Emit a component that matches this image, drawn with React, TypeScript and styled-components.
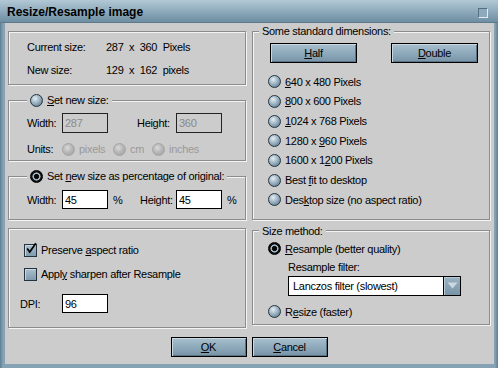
import React from 'react';
import styled, { createGlobalStyle, css } from 'styled-components';

const GlobalStyle = createGlobalStyle`
  html, body {
    margin: 0;
    padding: 0;
    background: #cccccc;
  }
  body {
    font-family: 'Liberation Sans', Arial, sans-serif;
    font-size: 11px;
    letter-spacing: -0.3px;
    color: #000;
  }
  u {
    text-decoration: underline;
    text-underline-offset: 1px;
  }
`;

const Window = styled.div`
  width: 498px;
  height: 368px;
  display: flex;
  flex-direction: column;
  overflow: hidden;
`;

const TitleBar = styled.div`
  height: 23px;
  flex: none;
  display: flex;
  align-items: center;
  justify-content: space-between;
  padding: 0 10px 0 7px;
  box-sizing: border-box;
  background: linear-gradient(180deg, #b3c8d5 0%, #92aebf 45%, #6f8ea3 100%);
  border-bottom: 1px solid #5d7a8d;
`;

const Title = styled.div`
  font-weight: bold;
  font-size: 12px;
  letter-spacing: 0;
  padding-top: 1px;
`;

const CloseBox = styled.div`
  width: 10px;
  height: 10px;
  box-sizing: border-box;
  border: 1px solid;
  border-color: #56707f #e3ebf0 #e3ebf0 #56707f;
  background: #8ea9ba;
  margin-top: 3px;
`;

const Frame = styled.div`
  flex: 1;
  display: flex;
  padding: 0 4px 4px 5px;
  background: linear-gradient(90deg, #5f7f93 0, #86a3b5 3px, #86a3b5 calc(100% - 3px), #5f7f93 100%);
`;

const Body = styled.div`
  flex: 1;
  background: #cccccc;
  padding: 1px 4px 0 3px;
  display: flex;
  flex-direction: column;
`;

const Columns = styled.div`
  display: grid;
  grid-template-columns: 238px 238px;
  column-gap: 6px;
  align-items: start;
`;

const Column = styled.div`
  display: flex;
  flex-direction: column;
`;

const etched = css`
  border: 1px solid #8c8c8c;
  box-shadow: inset 1px 1px 0 #f4f4f4, 1px 1px 0 #f4f4f4;
`;

const Panel = styled.div<{ $top: number; $height: number }>`
  ${etched};
  box-sizing: border-box;
  margin-top: ${p => p.$top}px;
  height: ${p => p.$height}px;
`;

const Group = styled.fieldset<{ $top: number }>`
  ${etched};
  margin: ${p => p.$top}px 0 0 0;
  padding: 0;
  min-width: 0;
`;

const Legend = styled.legend<{ $indent: number }>`
  margin-left: ${p => p.$indent}px;
  padding: 0 3px;
  background: #cccccc;
  line-height: 14px;
  display: flex;
  align-items: center;
  gap: 2px;
`;

const Content = styled.div<{ $pad: string }>`
  padding: ${p => p.$pad};
  display: flex;
  flex-direction: column;
`;

const InfoRow = styled.div<{ $mt: number }>`
  display: flex;
  height: 14px;
  align-items: center;
  margin-top: ${p => p.$mt}px;
`;

const InfoLabel = styled.span`
  width: 79px;
`;

const InfoValue = styled.span`
  white-space: pre;
`;

const Row = styled.div<{ $h: number; $mt?: number }>`
  display: flex;
  align-items: center;
  height: ${p => p.$h}px;
  margin-top: ${p => p.$mt ?? 0}px;
`;

const FieldLabel = styled.span<{ $w: number; $ml?: number }>`
  width: ${p => p.$w}px;
  margin-left: ${p => p.$ml ?? 0}px;
  flex: none;
`;

const TextField = styled.input<{ $h: number }>`
  width: 46px;
  height: ${p => p.$h}px;
  box-sizing: border-box;
  margin: 0;
  padding: 0 0 0 2px;
  border: 1px solid #000;
  border-radius: 0;
  outline: none;
  background: #fff;
  font: inherit;
  letter-spacing: inherit;
  color: #000;
  flex: none;
  &:disabled {
    background: #cccccc;
    color: #8a8a8a;
    border-color: #222;
  }
`;

const Pct = styled.span<{ $w: number }>`
  margin-left: 5px;
  width: ${p => p.$w}px;
  flex: none;
`;

const RadioDot = styled.span<{ $on?: boolean; $off?: boolean }>`
  width: 13px;
  height: 13px;
  flex: none;
  box-sizing: border-box;
  border-radius: 50%;
  border: 1px solid #26343e;
  background: radial-gradient(circle at 38% 32%, #e6eef3 0, #b3c7d3 30%, #7893a6 70%, #5a7588 100%);
  ${p =>
    p.$on &&
    css`
      border-color: #000;
      background: radial-gradient(circle at 50% 50%, #000 0, #111 2.4px, #9fb8c8 2.9px, #9fb8c8 3.8px, #111 4.3px, #000 100%);
    `}
  ${p =>
    p.$off &&
    css`
      border-color: #a4a4a4;
      background: radial-gradient(circle at 40% 35%, #dadada 0, #b8b8b8 45%, #9c9c9c 100%);
    `}
`;

const Option = styled.div<{ $h: number; $off?: boolean; $w?: number }>`
  display: flex;
  align-items: center;
  gap: 4px;
  height: ${p => p.$h}px;
  width: ${p => (p.$w ? `${p.$w}px` : 'auto')};
  flex: none;
  color: ${p => (p.$off ? '#9a9a9a' : '#000')};
`;

const CheckBox = styled.span`
  width: 13px;
  height: 13px;
  flex: none;
  box-sizing: border-box;
  border: 1px solid #24323c;
  background: linear-gradient(180deg, #a9bfcd 0%, #7f9bae 100%);
  box-shadow: inset 1px 1px 0 #c9d7e0;
  display: flex;
  align-items: center;
  justify-content: center;
  overflow: visible;
`;

const ButtonsRow = styled.div<{ $pad: string; $mt?: number }>`
  display: flex;
  justify-content: space-between;
  padding: ${p => p.$pad};
  margin-top: ${p => p.$mt ?? 0}px;
`;

const Button = styled.button<{ $w: number }>`
  width: ${p => p.$w}px;
  height: 20px;
  margin: 0;
  padding: 0;
  box-sizing: border-box;
  border: 1px solid #000;
  border-radius: 0;
  background: linear-gradient(180deg, #a9bfcd 0%, #8eaabb 50%, #7793a7 100%);
  box-shadow: inset 1px 1px 0 #cad8e1, inset -1px -1px 0 #5b7384;
  font: inherit;
  letter-spacing: inherit;
  color: #000;
`;

const DialogButtons = styled.div`
  display: flex;
  justify-content: center;
  gap: 5px;
  margin-top: 9px;
`;

const Select = styled.div`
  width: 173px;
  height: 20px;
  box-sizing: border-box;
  border: 1px solid #000;
  background: #fff;
  display: flex;
  align-items: stretch;
  margin-top: 2px;
`;

const SelectText = styled.span`
  flex: 1;
  display: flex;
  align-items: center;
  padding-left: 4px;
`;

const SelectArrow = styled.span`
  width: 16px;
  border-left: 1px solid #000;
  background: linear-gradient(180deg, #9ab3c3 0%, #7994a7 100%);
  box-shadow: inset 1px 1px 0 #b9cbd6;
  display: flex;
  align-items: center;
  justify-content: center;
`;

const Check = () => (
  <svg width="15" height="15" viewBox="0 0 15 15" style={{ marginTop: -3, marginRight: -2 }}>
    <path d="M2.5 7.5 L5.5 11.5 L12.5 1.5" fill="none" stroke="#000" strokeWidth="2" />
  </svg>
);

const standard = [
  <><u>6</u>40 x 480 Pixels</>,
  <><u>8</u>00 x 600 Pixels</>,
  <><u>1</u>024 x 768 Pixels</>,
  <>1280 x <u>9</u>60 Pixels</>,
  <>1600 x 1<u>2</u>00 Pixels</>,
  <>Best <u>f</u>it to desktop</>,
  <>Des<u>k</u>top size (no aspect ratio)</>,
];

export default function App() {
  return (
    <>
      <GlobalStyle />
      <Window>
        <TitleBar>
          <Title>Resize/Resample image</Title>
          <CloseBox />
        </TitleBar>
        <Frame>
          <Body>
            <Columns>
              <Column>
                <Panel $top={7} $height={54}>
                  <Content $pad="8px 0 0 18px">
                    <InfoRow $mt={0}>
                      <InfoLabel>Current size:</InfoLabel>
                      <InfoValue>287  x  360  Pixels</InfoValue>
                    </InfoRow>
                    <InfoRow $mt={9}>
                      <InfoLabel>New size:</InfoLabel>
                      <InfoValue>129  x  162  pixels</InfoValue>
                    </InfoRow>
                  </Content>
                </Panel>

                <Group $top={7}>
                  <Legend $indent={18}>
                    <Option $h={16}>
                      <RadioDot />
                      <span><u>S</u>et new size:</span>
                    </Option>
                  </Legend>
                  <Content $pad="5px 0 1px 18px">
                    <Row $h={20}>
                      <FieldLabel $w={35}>Width:</FieldLabel>
                      <TextField $h={20} disabled defaultValue="287" />
                      <FieldLabel $w={39} $ml={29}>Height:</FieldLabel>
                      <TextField $h={20} disabled defaultValue="360" />
                    </Row>
                    <Row $h={20} $mt={6}>
                      <FieldLabel $w={35}>Units:</FieldLabel>
                      <Option $h={20} $off $w={51}>
                        <RadioDot $off />
                        <span>pixels</span>
                      </Option>
                      <Option $h={20} $off $w={39}>
                        <RadioDot $off />
                        <span>cm</span>
                      </Option>
                      <Option $h={20} $off>
                        <RadioDot $off />
                        <span>inches</span>
                      </Option>
                    </Row>
                  </Content>
                </Group>

                <Group $top={7}>
                  <Legend $indent={18}>
                    <Option $h={16}>
                      <RadioDot $on />
                      <span>Set <u>n</u>ew size as percentage of original:</span>
                    </Option>
                  </Legend>
                  <Content $pad="6px 0 10px 18px">
                    <Row $h={19}>
                      <FieldLabel $w={35}>Width:</FieldLabel>
                      <TextField $h={19} defaultValue="45" />
                      <Pct $w={22}>%</Pct>
                      <FieldLabel $w={36} $ml={5}>Height:</FieldLabel>
                      <TextField $h={19} defaultValue="45" />
                      <Pct $w={10}>%</Pct>
                    </Row>
                  </Content>
                </Group>

                <Panel $top={8} $height={100}>
                  <Content $pad="12px 0 0 15px">
                    <Option $h={18}>
                      <CheckBox><Check /></CheckBox>
                      <span>Preserve <u>a</u>spect ratio</span>
                    </Option>
                    <Row $h={18} $mt={6}>
                      <Option $h={18}>
                        <CheckBox />
                        <span>Appl<u>y</u> sharpen after Resample</span>
                      </Option>
                    </Row>
                    <Row $h={19} $mt={11}>
                      <FieldLabel $w={42} $ml={-4}>DPI:</FieldLabel>
                      <TextField $h={19} defaultValue="96" />
                    </Row>
                  </Content>
                </Panel>
              </Column>

              <Column>
                <Group $top={0}>
                  <Legend $indent={6}>Some standard dimensions:</Legend>
                  <Content $pad="5px 0 9px 0">
                    <ButtonsRow $pad="0 11px 0 17px">
                      <Button $w={87}><u>H</u>alf</Button>
                      <Button $w={87}><u>D</u>ouble</Button>
                    </ButtonsRow>
                    <Content $pad="9px 0 0 15px">
                      {standard.map((label, i) => (
                        <Option key={i} $h={19.67}>
                          <RadioDot />
                          <span>{label}</span>
                        </Option>
                      ))}
                    </Content>
                  </Content>
                </Group>

                <Group $top={4}>
                  <Legend $indent={6}>Size method:</Legend>
                  <Content $pad="2px 0 3px 15px">
                    <Option $h={18}>
                      <RadioDot $on />
                      <span><u>R</u>esample (better quality)</span>
                    </Option>
                    <Row $h={16} $mt={1}>
                      <FieldLabel $w={120} $ml={20}>Resample filter:</FieldLabel>
                    </Row>
                    <Row $h={20} $mt={0}>
                      <Select style={{ marginLeft: 20 }}>
                        <SelectText>Lanczos filter (slowest)</SelectText>
                        <SelectArrow>
                          <svg width="11" height="7" viewBox="0 0 11 7">
                            <path d="M0.5 0.5 L10.5 0.5 L5.5 6.5 Z" fill="#cbd8e0" />
                          </svg>
                        </SelectArrow>
                      </Select>
                    </Row>
                    <Option $h={18} style={{ marginTop: 8 }}>
                      <RadioDot />
                      <span>R<u>e</u>size (faster)</span>
                    </Option>
                  </Content>
                </Group>
              </Column>
            </Columns>

            <DialogButtons>
              <Button $w={76}><u>O</u>K</Button>
              <Button $w={76}><u>C</u>ancel</Button>
            </DialogButtons>
          </Body>
        </Frame>
      </Window>
    </>
  );
}
